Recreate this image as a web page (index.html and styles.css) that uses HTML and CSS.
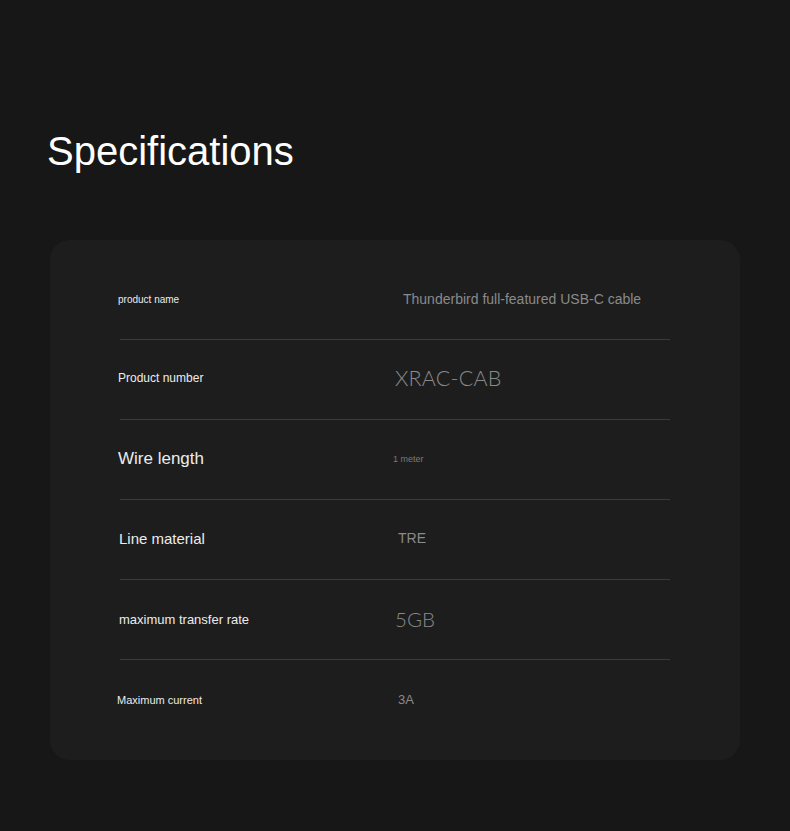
FILE: index.html
```html
<!DOCTYPE html>
<html lang="en">
<head>
<meta charset="utf-8">
<title>Specifications</title>
<link rel="stylesheet" href="styles.css">
</head>
<body>
<main class="page">
  <h1 class="title">Specifications</h1>
  <section class="card">
    <div class="row r1">
      <span class="label">product name</span>
      <span class="value">Thunderbird full-featured USB-C cable</span>
    </div>
    <div class="row r2">
      <span class="label">Product number</span>
      <span class="value">XRAC-CAB</span>
    </div>
    <div class="row r3">
      <span class="label">Wire length</span>
      <span class="value">1 meter</span>
    </div>
    <div class="row r4">
      <span class="label">Line material</span>
      <span class="value">TRE</span>
    </div>
    <div class="row r5">
      <span class="label">maximum transfer rate</span>
      <span class="value">5GB</span>
    </div>
    <div class="row r6">
      <span class="label">Maximum current</span>
      <span class="value">3A</span>
    </div>
  </section>
</main>
</body>
</html>
```

FILE: styles.css
```css
* { box-sizing: border-box; }
html, body { margin: 0; padding: 0; }
body {
  background: #171717;
  font-family: "Liberation Sans", Arial, sans-serif;
  color: #f2f2f2;
  width: 790px;
  height: 831px;
  overflow: hidden;
}
.page {
  padding: 126px 50px 0 50px;
}
.title {
  margin: 0 0 0 -3px;
  font-size: 40px;
  font-weight: 400;
  line-height: 50px;
  color: #ffffff;
}
.card {
  margin-top: 64px;
  width: 690px;
  height: 520px;
  background: #1d1d1d;
  border-radius: 20px;
  padding: 20px 70px 0 70px;
}
.row {
  height: 80px;
  border-bottom: 1px solid #3b3b3b;
  display: grid;
  grid-template-columns: 276px 1fr;
  align-items: center;
  padding-bottom: 1px;
}
.row.r6 { border-bottom: none; }
.label {
  color: #ececec;
  margin-left: -2px;
  white-space: nowrap;
}
.value {
  color: #8a8a8a;
  white-space: nowrap;
}
.r1 .label { font-size: 10px; }
.r1 .value { font-size: 14px; margin-left: 7px; }
.r2 .label { font-size: 12px; margin-top: -2px; }
.r2 .value { font-family: Lato, "Open Sans", sans-serif; font-weight: 300; font-size: 21.5px; letter-spacing: 0.2px; margin-left: -1px; margin-top: -2px; }
.r3 .label { font-size: 17px; }
.r3 .value { font-size: 9px; margin-left: -3px; color: #7a7a7a; }
.r4 .label { font-size: 15px; margin-left: -1px; margin-top: -2px; }
.r4 .value { font-size: 14px; margin-left: 2px; margin-top: -2px; }
.r5 .label { font-size: 13px; margin-left: -1px; }
.r5 .value { font-family: Lato, "Open Sans", sans-serif; font-weight: 300; font-size: 20.5px; margin-left: -1px; }
.r6 .label { font-size: 11px; margin-left: -3px; }
.r6 .value { font-size: 13px; margin-left: 2px; }
```
